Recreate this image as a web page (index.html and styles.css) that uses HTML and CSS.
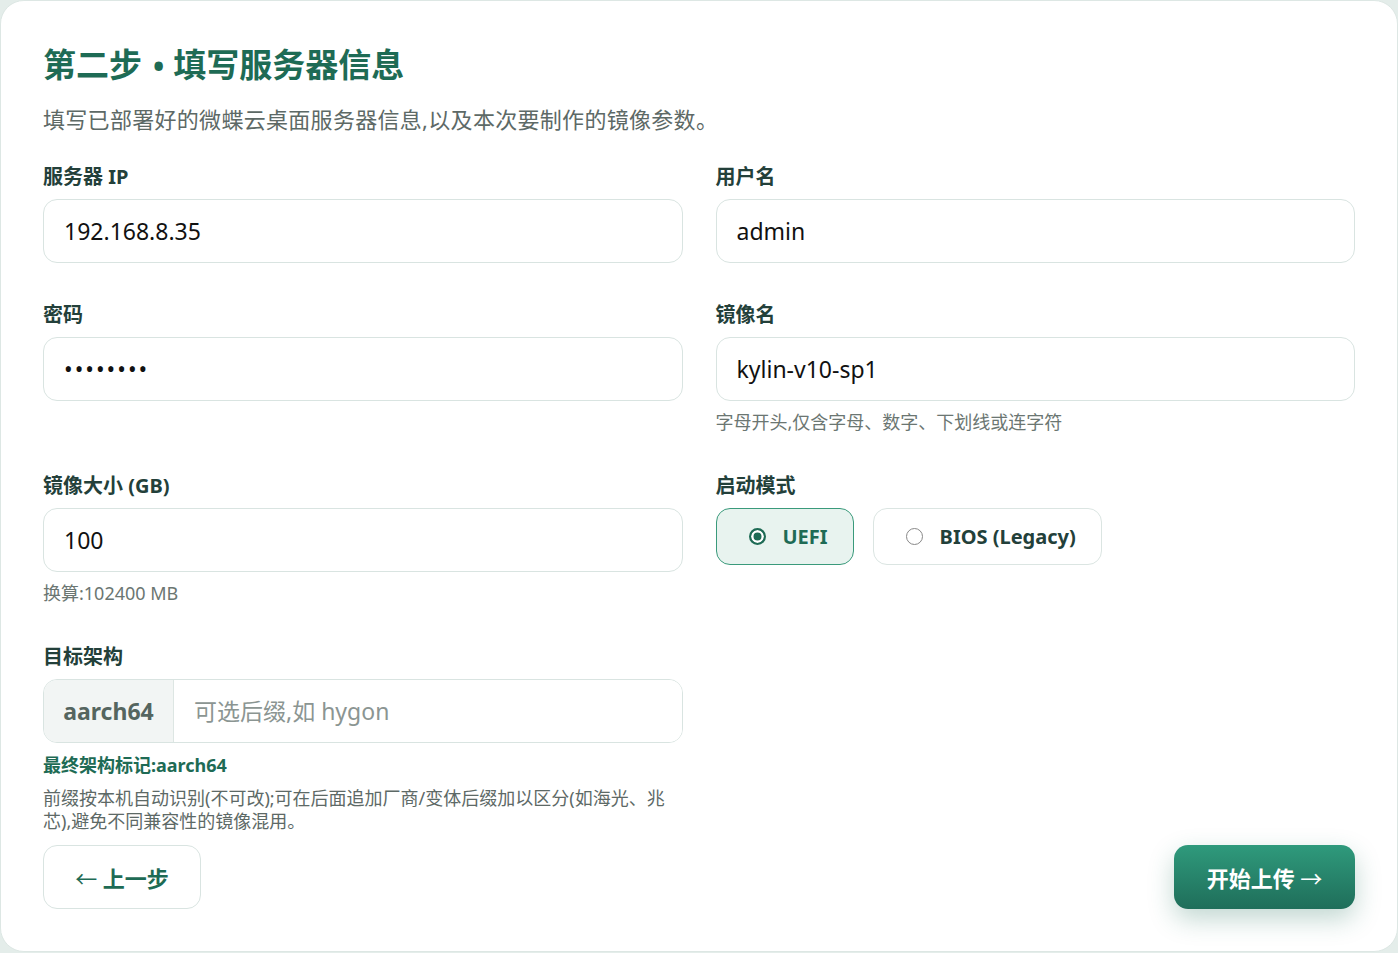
FILE: index.html
```html
<!DOCTYPE html>
<html lang="zh-CN">

<head>
    <meta charset="UTF-8">
    <meta name="viewport" content="width=device-width, initial-scale=1.0">
    <title>填写服务器信息</title>
    <link rel="stylesheet" href="styles.css">
</head>

<body>
    <div class="card">
        <h1 class="title">第二步<span class="sep">•</span>填写服务器信息</h1>
        <p class="subtitle">填写已部署好的微蝶云桌面服务器信息,以及本次要制作的镜像参数。</p>

        <div class="form-grid">
            <div class="field">
                <label class="label">服务器 IP</label>
                <input class="input" type="text" value="192.168.8.35">
            </div>
            <div class="field">
                <label class="label">用户名</label>
                <input class="input" type="text" value="admin">
            </div>

            <div class="field">
                <label class="label">密码</label>
                <input class="input pwd" type="password" value="12345678">
            </div>
            <div class="field">
                <label class="label">镜像名</label>
                <input class="input" type="text" value="kylin-v10-sp1">
                <div class="hint">字母开头,仅含字母、数字、下划线或连字符</div>
            </div>

            <div class="field">
                <label class="label">镜像大小 (GB)</label>
                <input class="input" type="text" value="100">
                <div class="hint">换算:102400 MB</div>
            </div>
            <div class="field">
                <label class="label">启动模式</label>
                <div class="radio-group">
                    <div class="radio-option active">
                        <span class="radio-dot"></span>
                        <span>UEFI</span>
                    </div>
                    <div class="radio-option">
                        <span class="radio-dot"></span>
                        <span>BIOS (Legacy)</span>
                    </div>
                </div>
            </div>

            <div class="field">
                <label class="label">目标架构</label>
                <div class="input-group">
                    <span class="prefix">aarch64</span>
                    <input class="suffix" type="text" placeholder="可选后缀,如 hygon">
                </div>
                <div class="arch-final">最终架构标记:aarch64</div>
                <div class="desc">前缀按本机自动识别(不可改);可在后面追加厂商/变体后缀加以区分(如海光、兆芯),避免不同兼容性的镜像混用。</div>
            </div>
        </div>

        <div class="actions">
            <button class="btn btn-back"><span class="arrow">←</span> 上一步</button>
            <button class="btn btn-primary">开始上传 <span class="arrow">→</span></button>
        </div>
    </div>
</body>

</html>
```

FILE: styles.css
```css
* {
    margin: 0;
    padding: 0;
    box-sizing: border-box;
}

body {
    background-color: #e4edea;
    font-family: "Noto Sans", "Noto Sans CJK SC", sans-serif;
}

.card {
    background-color: #fff;
    border: 1px solid #dde7e4;
    border-radius: 24px;
    padding: 43px 42px 42px;
}

.title {
    font-size: 33px;
    line-height: 42px;
    font-weight: 700;
    color: #1e6b55;
}

.title .sep {
    display: inline-block;
    margin: 0 9px 0 11px;
    font-size: 30px;
}

.subtitle {
    margin-top: 17px;
    font-size: 22px;
    line-height: 30px;
    letter-spacing: 0.3px;
    color: #5d6966;
}

/* form */
.form-grid {
    margin-top: 31px;
    display: grid;
    grid-template-columns: 1fr 1fr;
    column-gap: 33px;
    row-gap: 40px;
}

.field {
    display: flex;
    flex-direction: column;
}

.label {
    font-size: 20px;
    line-height: 24px;
    font-weight: 700;
    color: #23403a;
    margin-bottom: 10px;
}

.input {
    height: 64px;
    border: 1px solid #d9e4e1;
    border-radius: 14px;
    padding: 0 20px;
    font-family: inherit;
    font-size: 23px;
    color: #111;
    outline: none;
    background-color: #fff;
}

.input.pwd {
    letter-spacing: 2px;
}

.hint {
    margin-top: 9px;
    font-size: 18px;
    line-height: 24px;
    color: #6b7672;
}

/* radio */
.radio-group {
    display: flex;
    gap: 19px;
}

.radio-option {
    height: 57px;
    display: flex;
    align-items: center;
    gap: 17px;
    padding: 0 25px 0 32px;
    border: 1px solid #dbe5e2;
    border-radius: 14px;
    font-size: 20px;
    font-weight: 700;
    color: #23403a;
    background-color: #fff;
}

.radio-dot {
    width: 17px;
    height: 17px;
    border: 1.5px solid #888;
    border-radius: 50%;
    background-color: #fff;
}

.radio-option.active {
    background-color: #e8f3ef;
    border-color: #3a9a7b;
    color: #1e6b55;
}

.radio-option.active .radio-dot {
    border: 2px solid #1e6b55;
    background-color: #1e6b55;
    box-shadow: inset 0 0 0 2.5px #fff;
}

/* arch */
.input-group {
    display: flex;
    height: 64px;
    border: 1px solid #d9e4e1;
    border-radius: 14px;
    overflow: hidden;
}

.prefix {
    width: 130px;
    display: flex;
    align-items: center;
    justify-content: center;
    background-color: #f2f5f4;
    border-right: 1px solid #dde6e3;
    font-size: 23px;
    font-weight: 700;
    color: #55655f;
}

.suffix {
    flex: 1;
    border: 0;
    outline: none;
    padding: 0 20px;
    font-family: inherit;
    font-size: 23px;
    color: #111;
}

.suffix::placeholder {
    color: #8b9592;
}

.arch-final {
    margin-top: 10px;
    font-size: 18px;
    line-height: 24px;
    font-weight: 700;
    color: #1e6b55;
}

.desc {
    margin-top: 10px;
    font-size: 18px;
    line-height: 23px;
    color: #5d6966;
}

/* buttons */
.actions {
    margin-top: 12px;
    display: flex;
    justify-content: space-between;
    align-items: center;
}

.btn {
    height: 64px;
    border-radius: 14px;
    font-family: inherit;
    font-size: 22px;
    font-weight: 700;
    padding: 0 30px;
}

.btn .arrow {
    font-weight: 400;
}

.btn-back {
    width: 158px;
    border: 1px solid #d9e4e1;
    background-color: #fff;
    color: #1e6b55;
}

.btn-primary {
    width: 181px;
    border: 0;
    color: #fff;
    background: linear-gradient(180deg, #2f9a7c, #1f6e5a);
    box-shadow: 0 10px 26px rgba(31, 111, 90, 0.28);
}
```
